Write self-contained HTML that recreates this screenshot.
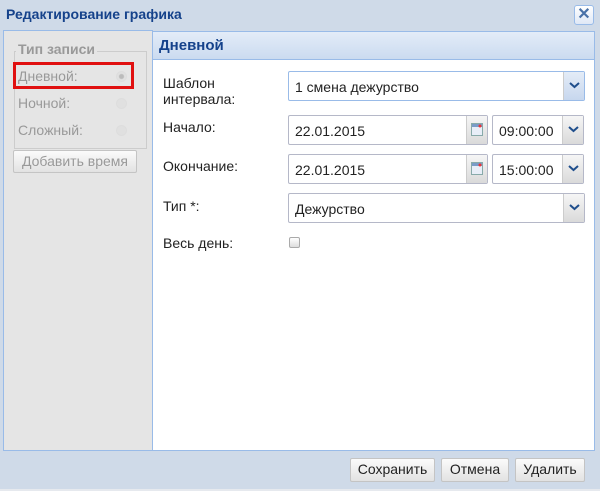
<!DOCTYPE html>
<html><head><meta charset="utf-8"><style>
*{box-sizing:border-box;margin:0;padding:0}
body{width:600px;height:491px;background:#cfdae8;font-family:"Liberation Sans",Arial,sans-serif;position:relative;overflow:hidden;font-size:14px;color:#222}
.a{position:absolute}
.title{left:6px;top:6px;font-size:14px;font-weight:bold;color:#15428b}
.close{left:574px;top:5px;width:20px;height:20px;border:1px solid #99bbe8;border-radius:3px;background:linear-gradient(#fff,#dfe8f6);color:#4a72a8;font-weight:bold;font-size:16px;text-align:center;line-height:18px}
.left{left:3px;top:30px;width:150px;height:421px;background:#e5e5e5;border:1px solid #99bbe8}
.right{left:152px;top:31px;width:443px;height:420px;background:#fff;border:1px solid #99bbe8}
.hdr{left:0;top:0;width:441px;height:28px;background:linear-gradient(#e3ecf8,#cbdbf0);border-bottom:1px solid #99bbe8;font-weight:bold;color:#15428b;font-size:15px;padding:5px 0 0 6px}
.fs{left:10px;top:20px;width:133px;height:98px;border:1px solid #ccc}
.gl{color:#999;font-size:14px}
.radio{width:11px;height:11px;border-radius:50%;border:1px solid #ddd;background:#e0e0e0}
.btn{border:1px solid #c4c4c4;border-radius:2px;background:linear-gradient(#fbfbfb,#e2e2e2);font-size:14px;text-align:center;line-height:21px;height:24px}
.fld{border:1px solid #b5b8c8;background:#fff;height:30px;padding:7px 6px;font-size:14px;border-radius:2px}
.trig{position:absolute;right:0;top:0;width:21px;height:28px;background:linear-gradient(#f6f6f6,#dadada);border-left:1px solid #ccc}
.trig.b{background:linear-gradient(#e4ecf7,#c7d7ee)}
.trig svg{position:absolute;left:5px;top:10px}
</style></head><body>
<div class="a title">Редактирование графика</div>
<div class="a close">✕</div>
<div class="a left">
 <div class="a fs"></div>
 <div class="a gl" style="left:12px;top:10px;background:#e5e5e5;padding:0 2px;font-weight:bold">Тип записи</div>
 <div class="a gl" style="left:14px;top:37px">Дневной:</div>
 <div class="a radio" style="left:112px;top:40px;background:radial-gradient(#bbb 2px,#e0e0e0 3px)"></div>
 <div class="a gl" style="left:14px;top:64px">Ночной:</div>
 <div class="a radio" style="left:112px;top:67px"></div>
 <div class="a gl" style="left:14px;top:91px">Сложный:</div>
 <div class="a radio" style="left:112px;top:94px"></div>
 <div class="a btn gl" style="left:9px;top:119px;width:124px;height:23px;color:#999">Добавить время</div>
 <div class="a" style="left:9px;top:31px;width:121px;height:27px;border:3px solid #e01010"></div>
</div>
<div class="a right">
 <div class="a hdr">Дневной</div>
 <div class="a" style="left:10px;top:43px;line-height:16px">Шаблон<br>интервала:</div>
 <div class="a fld" style="left:135px;top:39px;width:297px;border-color:#99bbe8">1 смена дежурство<div class="trig b"><svg width="11" height="7"><path d="M1 1l4.5 4 4.5-4" stroke="#1f4e8c" stroke-width="2" fill="none"/></svg></div></div>
 <div class="a" style="left:10px;top:87px">Начало:</div>
 <div class="a fld" style="left:135px;top:83px;width:200px">22.01.2015<div class="trig"><svg width="12" height="13" style="left:4px;top:7px"><rect x=".5" y=".5" width="11" height="12" fill="#e8eef8" stroke="#8aa"/><rect x="1" y="1" width="10" height="3" fill="#7a9cc8"/><circle cx="9" cy="3" r="1.5" fill="#e33"/></svg></div></div>
 <div class="a fld" style="left:339px;top:83px;width:92px">09:00:00<div class="trig"><svg width="11" height="7"><path d="M1 1l4.5 4 4.5-4" stroke="#1f4e8c" stroke-width="2" fill="none"/></svg></div></div>
 <div class="a" style="left:10px;top:126px">Окончание:</div>
 <div class="a fld" style="left:135px;top:122px;width:200px">22.01.2015<div class="trig"><svg width="12" height="13" style="left:4px;top:7px"><rect x=".5" y=".5" width="11" height="12" fill="#e8eef8" stroke="#8aa"/><rect x="1" y="1" width="10" height="3" fill="#7a9cc8"/><circle cx="9" cy="3" r="1.5" fill="#e33"/></svg></div></div>
 <div class="a fld" style="left:339px;top:122px;width:92px">15:00:00<div class="trig"><svg width="11" height="7"><path d="M1 1l4.5 4 4.5-4" stroke="#1f4e8c" stroke-width="2" fill="none"/></svg></div></div>
 <div class="a" style="left:10px;top:166px">Тип *:</div>
 <div class="a fld" style="left:135px;top:161px;width:297px">Дежурство<div class="trig"><svg width="11" height="7"><path d="M1 1l4.5 4 4.5-4" stroke="#1f4e8c" stroke-width="2" fill="none"/></svg></div></div>
 <div class="a" style="left:10px;top:203px">Весь день:</div>
 <div class="a" style="left:136px;top:205px;width:11px;height:11px;border:1px solid #aaa;border-radius:2px;background:linear-gradient(#fff,#ddd)"></div>
</div>
<div class="a btn" style="left:350px;top:458px;width:85px">Сохранить</div>
<div class="a btn" style="left:441px;top:458px;width:68px">Отмена</div>
<div class="a btn" style="left:515px;top:458px;width:70px">Удалить</div>
<div class="a" style="left:0;top:489px;width:600px;height:2px;background:#e6e9ee"></div>
</body></html>
